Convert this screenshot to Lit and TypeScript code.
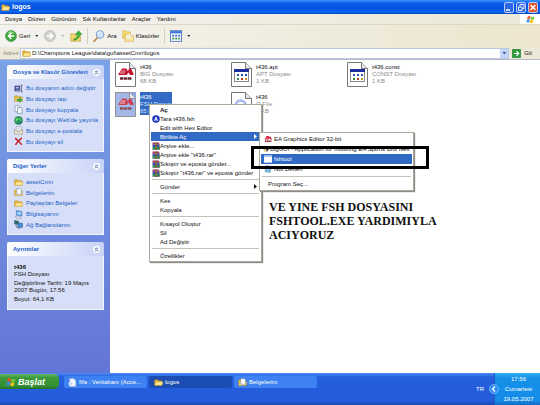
import { LitElement, html, css, svg, nothing } from "lit";
import { customElement, property } from "lit/decorators.js";
import { classMap } from "lit/directives/class-map.js";

const folderShape = svg`
  <path d="M1 4.5Q1 3 2.5 3H6L8 5H13Q14.5 5 14.5 6.5V13H1Z" fill="#e8b93c" stroke="#b08420" stroke-width=".8"/>
  <path d="M1.5 13L3.5 7H16L14 13Z" fill="#ffe795" stroke="#c79a30" stroke-width=".7"/>`;
const eaShape = svg`
  <path d="M1 9L5 2H9L10.500 5L12 2L16 9H12.500L11 6L9 9Z" fill="#c8102e"/>
  <path d="M4 4.600H8M3 7H8" stroke="#fff" stroke-width=".7"/>
  <path d="M2 12.500H15" stroke="#8a1420" stroke-width="3" stroke-dasharray="3 .6"/>`;
const flagShape = svg`
  <path d="M3 2.500Q5.500 1 8 2.500L7 7.500Q4.500 6 2 7.500Z" fill="#ee5126"/>
  <path d="M9 2.800Q11.500 4.200 15 2.800L13.800 8Q10.500 9 8 7.800Z" fill="#7cc142"/>
  <path d="M1.800 8.400Q4.500 7 6.800 8.400L5.600 13.500Q3.300 12 .5 13.500Z" fill="#3f8cf0"/>
  <path d="M7.800 8.800Q10.500 10 13.600 8.900L12.300 14Q9.500 15.200 6.600 13.900Z" fill="#fbc416"/>`;

const icons: Record<string, unknown> = {
  folder: folderShape,
  flag: flagShape,
  ea: eaShape,
  back: svg`<circle cx="8" cy="8" r="7.300" fill="#3aa63a" stroke="#1f7a28" stroke-width=".7"/>
    <path d="M3 5Q5 1.500 8 1.500T13 5Q8 3.500 3 5Z" fill="#9be08f"/>
    <path d="M8.500 4L4.500 8L8.500 12M5 8H12.500" fill="none" stroke="#fff" stroke-width="2"/>`,
  forward: svg`<circle cx="8" cy="8" r="7.300" fill="#d0d0cb" stroke="#a4a49e" stroke-width=".7"/>
    <path d="M7.500 4L11.500 8L7.500 12M11 8H3.500" fill="none" stroke="#fff" stroke-width="2"/>`,
  up: svg`<path d="M1 5H6L7.500 6.500H14V15H1Z" fill="#f6d66c" stroke="#b98f2d" stroke-width=".7"/>
    <path d="M5 12Q10 11 10 6H7L11.500 1L16 6H13Q13 12 5 14Z" fill="#3fb53c" stroke="#1d7c22" stroke-width=".6"/>`,
  search: svg`<path d="M6 10L1.500 15" stroke="#b98a4a" stroke-width="2.400" stroke-linecap="round"/>
    <circle cx="9.500" cy="6" r="5" fill="#cfe6fa" stroke="#7a9cc6" stroke-width="1.400"/>
    <path d="M6.500 5Q7.500 2.500 10 2.500" stroke="#fff" stroke-width="1.300" fill="none"/>`,
  folders: svg`<path d="M1 1H5L6.500 2.500H11V11H1Z" fill="#f8d96e" stroke="#c79a38" stroke-width=".7"/>
    <path d="M4 6H8L9.500 7.500H15.500V15H4Z" fill="#ffe897" stroke="#c79a38" stroke-width=".7"/>
    <circle cx="9" cy="9" r="4" fill="#f3f4e6" stroke="#d8c88c" stroke-width=".6" opacity=".8"/>`,
  views: svg`<rect x=".5" y="1" width="15" height="14" fill="#fff" stroke="#2e5db5"/>
    <rect x="1" y="1.500" width="14" height="3" fill="#3d78dd"/>
    <path d="M3 7.500H13.500" stroke="#2f62c4" stroke-width="2.400" stroke-dasharray="2.500 1.500"/>
    <path d="M3 11.500H13.500" stroke="#3c8f5f" stroke-width="2.400" stroke-dasharray="2.500 1.500"/>`,
  go: svg`<rect x=".5" y=".5" width="15" height="15" rx="1.500" fill="#2f9a38" stroke="#1c7426"/>
    <path d="M8 4L12 8L8 12M11.500 8H3.500" stroke="#fff" stroke-width="2" fill="none"/>`,
  rename: svg`<rect x="1" y="3" width="10" height="10" fill="#33427f"/><rect x="3" y="5" width="6" height="3" fill="#aebdf0"/>
    <path d="M12 2H15M13.500 2V14M12 14H15" stroke="#4d4d62" stroke-width="1.300"/><rect x="3" y="10" width="8" height="3" fill="#7a86b5"/>`,
  move: svg`${folderShape}<path d="M5 9H10V6L15 10.500L10 15V12H5Z" fill="#3caf3b" stroke="#1b7723" stroke-width=".6"/>`,
  copy: svg`<path d="M2 1H8L11 4V12H2Z" fill="#fff" stroke="#67789f"/><path d="M6 4H11L14.500 7V15H6Z" fill="#e9f4f8" stroke="#4f7d86"/>`,
  web: svg`<circle cx="8" cy="8" r="7" fill="#27955a" stroke="#14693c"/>
    <path d="M3 5Q6 2 8 4T6 8T4 12Q1 9 3 5ZM10 3Q14 5 13 9L10 8Z" fill="#66d46e"/><path d="M9 10L13 12L9 14Z" fill="#2f6dd6"/>`,
  mail: svg`<path d="M4 1H13V9H4Z" fill="#fff" stroke="#8e93a8"/><path d="M1 6L8 11L15 6V14.500H1Z" fill="#f1ead2" stroke="#90866a"/>
    <path d="M6 3.500H11M6 5.500H11" stroke="#9aa9d2"/>`,
  remove: svg`<path d="M2 2Q8 7 14 14M14 1.500Q7 7 2.500 14" stroke="#c22330" stroke-width="2.600" fill="none"/>`,
  documents: svg`${folderShape}<path d="M5 1H11L13 3V11H5Z" fill="#fff" stroke="#6f86b8"/>`,
  computer: svg`<path d="M4 1L14 2.500V11L4 9.500Z" fill="#3f8ee4" stroke="#6c7fa8"/><path d="M5.500 3L12.500 4V9L5.500 8Z" fill="#9fdcff"/>
    <path d="M2 11.500L11 12L13 15H4Z" fill="#dfe4ee" stroke="#7c89a6" stroke-width=".7"/>`,
  network: svg`<path d="M1 1L8 2V8L1 7Z" fill="#2d6f5b" stroke="#36507d"/><path d="M7 5L15 6V13L7 12Z" fill="#3a93df" stroke="#36507d"/>
    <path d="M3 9L6 14H12" stroke="#36507d" stroke-width="1.500" fill="none"/>`,
  avast: svg`<circle cx="8" cy="8" r="7.500" fill="#1b34b8"/><path d="M5 12L8 4L11 12M6 9.500H10" stroke="#fff" stroke-width="1.800" fill="none"/>`,
  archive: svg`<rect x="1" y="1" width="13" height="4.500" fill="#a33a64"/><rect x="1" y="5.500" width="13" height="4.500" fill="#3b4fa8"/>
    <rect x="1" y="10" width="14" height="4.500" fill="#2f8c58"/><path d="M7 1H10V15H7Z" fill="#8c6b34"/><path d="M1 15H15V3" fill="none" stroke="#222"/>`,
  big: svg`<path d="M4 2L8 6L6 14L2 8Z" fill="#d9b640"/><path d="M8 6L14 9L9 14Z" fill="#3d3d3d"/>`,
  program: svg`<rect x="0" y="1" width="16" height="14" fill="#fff" stroke="#d7dff0"/><rect x="0" y="1" width="16" height="2.500" fill="#8ab0ec"/>`,
  notepad: svg`<path d="M4 1L14 3L12 15L2 13Z" fill="#7cc0e8" stroke="#38789f"/>`,
  database: svg`<path d="M3 1H10L14 5V15H3Z" fill="#eef4ff" stroke="#9ab"/><circle cx="5" cy="10" r="3.500" fill="#c6d9f6" stroke="#fff"/>`,
};

const icon = (name: string) =>
  html`<svg class="icon" viewBox="0 0 16 16" aria-hidden="true">${icons[name] ?? nothing}</svg>`;

const fileArt: Record<string, unknown> = {
  ea: svg`<path d="M3 13L7 6.500H11.500L13 9.500L14 6.500H16L19 13H15L13.500 10.500L11.500 13Z" fill="#c4122c"/>
    <path d="M6 9H10.500M5 11H10" stroke="#fff" stroke-width=".7"/><path d="M5 16.500H17" stroke="#6b2a35" stroke-width="2.400" stroke-dasharray="3.400 .5"/>`,
  unknown: svg`<rect x="3.500" y="7.500" width="14" height="12" fill="#fff" stroke="#8a8a94"/><rect x="3" y="7" width="15" height="3" fill="#1c2e9c"/>
    <path d="M6 13H8M10 13H12M14 13H16" stroke="#2c50b8" stroke-width="2"/><path d="M6 17H8" stroke="#2f8f4b" stroke-width="2"/><path d="M10 17H12" stroke="#c23434" stroke-width="2"/><path d="M14 17H16" stroke="#c59a28" stroke-width="2"/>`,
  object: svg`<path d="M6 17A5 5 0 1 1 14 16" fill="none" stroke="#a9b8ee" stroke-width="2.500"/>`,
};

interface MenuEntry { label: string; icon?: string; bold?: boolean; active?: boolean; sub?: boolean; flush?: boolean }

@customElement("popup-menu")
class PopupMenu extends LitElement {
  @property({ attribute: false }) entries: (MenuEntry | null)[] = [];

  static styles = css`
    :host { display: block; background: #fff; border: 1px solid #aca899; box-shadow: 1px 1px 1px #8c8c8c; }
    .list { list-style: none; margin: 0; padding: var(--menu-pad, 0) 1px 1px; }
    .rule { height: 1px; margin: 2px 1px; background: #c5c2b8; }
    .item {
      display: flex; align-items: center; width: 100%; height: var(--row, 9px); padding: 0 3px 0 1px;
      border: 0; background: none; color: #111; text-align: left; white-space: nowrap;
      font: 6px/8px "Liberation Sans", Arial, sans-serif;
    }
    .bold { font-weight: bold; }
    .active { background: #316ac5; color: #fff; }
    .mark { width: var(--mark, 8px); height: 8px; display: flex; justify-content: center; }
    .flush .mark { width: 6px; }
    .icon { width: 8px; height: 8px; }
    .label { flex: 1; }
    .arrow { width: 3px; height: 5px; background: currentColor; clip-path: polygon(0 0, 100% 50%, 0 100%); }
  `;

  render() {
    return html`<ul class="list" role="menu">
      ${this.entries.map((e) => e
        ? html`<li role="none"><button role="menuitem" class=${classMap({ item: true, bold: !!e.bold, active: !!e.active, flush: !!e.flush })}>
            <span class="mark">${e.icon ? icon(e.icon) : nothing}</span><span class="label">${e.label}</span>
            ${e.sub ? html`<span class="arrow"></span>` : nothing}</button></li>`
        : html`<li class="rule" role="separator"></li>`)}
    </ul>`;
  }
}

@customElement("task-panel")
class TaskPanel extends LitElement {
  @property() heading = "";

  static styles = css`
    :host { display: block; }
    .head {
      display: flex; align-items: center; justify-content: space-between; height: 14px; padding: 0 3px 0 6px;
      border-radius: 2px 2px 0 0; background: linear-gradient(90deg, #fff, #c6d3f7);
    }
    .title { margin: 0; font: bold 6px/12px "Liberation Sans", Arial, sans-serif; color: #215dc6; white-space: nowrap; }
    .toggle { width: 9px; height: 9px; padding: 0; border: 0; background: none; display: flex; }
    .chevrons { width: 9px; height: 9px; }
    .body { background: #d6dff7; border: 1px solid #f2f5fd; border-top: 0; padding: 4px 6px; }
  `;

  render() {
    return html`<div class="head"><h2 class="title">${this.heading}</h2>
        <button class="toggle" aria-label=${this.heading}><svg class="chevrons" viewBox="0 0 18 18">
          <circle cx="9" cy="9" r="8" fill="#fff" stroke="#b3c2e6"/>
          <path d="M6 8.500L9 5.500L12 8.500M6 12.500L9 9.500L12 12.500" fill="none" stroke="#2b4a96" stroke-width="1.800"/></svg></button></div>
      <div class="body"><slot></slot></div>`;
  }
}

@customElement("app-root")
class AppRoot extends LitElement {
  static styles = css`
    :host {
      display: flex; flex-direction: column; min-height: 100vh; overflow: hidden; background: #fff; color: #111;
      font: 6px/8px "Liberation Sans", Arial, sans-serif;
    }
    * { box-sizing: border-box; }
    button, input { font: inherit; color: inherit; padding: 0; border: 0; background: none; }
    .icon { display: block; flex: none; width: 9px; height: 9px; }
    .titlebar {
      display: flex; align-items: center; gap: 2px; height: 14px; padding: 0 2px 0 1px; color: #fff;
      background: linear-gradient(#3a93ff, #0a5be8 25%, #0653e0 65%, #0a68fc 85%, #0342b5);
    }
    .caption { flex: 1; margin: 0; font: bold 7px/12px "Liberation Sans", Arial, sans-serif; }
    .winbtn { width: 10px; height: 11px; border: 1px solid #b8cdf8; border-radius: 2px; background: #2e66e4; }
    .winbtn.close { background: #e0532c; }
    .glyph { display: block; width: 8px; height: 9px; }
    .menubar { display: flex; height: 11px; background: linear-gradient(90deg, #f3f2ee, #ece8d6); border-bottom: 1px solid #dcd8c6; }
    .menus { flex: 1; display: flex; align-items: center; gap: 6px; padding-left: 5px; }
    .brand { width: 20px; background: #fff; display: flex; align-items: center; justify-content: center; }
    .toolbar {
      display: flex; align-items: center; height: 22px; padding-left: 5px; gap: 5px;
      background: linear-gradient(90deg, #f4f3f0, #efecdd 60%, #ede5cd);
    }
    .tool { display: flex; align-items: center; gap: 2px; white-space: nowrap; }
    .tool .icon { width: 12px; height: 12px; }
    .drop { width: 3px; height: 2px; margin-right: 1px; background: #222; clip-path: polygon(0 0, 100% 0, 50% 100%); }
    .drop.off { background: #b5b3a8; }
    .divider { width: 1px; height: 16px; background: #d3cfbf; }
    .address { display: flex; align-items: center; gap: 2px; height: 12px; padding: 0 8px 0 3px; background: #ede9d8; }
    .hint { color: #8f8c80; width: 15px; }
    .combo { flex: 1; display: flex; align-items: center; gap: 1px; height: 11px; padding-left: 1px; background: #fff; border: 1px solid #b9c8dc; }
    .path { flex: 1; min-width: 0; height: 9px; }
    .pull { width: 8px; height: 9px; background: #c4d5fb; display: flex; align-items: center; justify-content: center; }
    .pull .drop { background: #2d4d8f; width: 4px; height: 3px; margin: 0; }
    .go { display: flex; align-items: center; gap: 3px; margin-left: 1px; }
    .main { flex: 1; display: flex; position: relative; border-top: 1px solid #b4bac8; }
    .side {
      width: 110px; padding: 5px 6px 0 7px; display: flex; flex-direction: column; gap: 7px;
      background: linear-gradient(#7ba2e7, #6375d6);
    }
    .links { list-style: none; margin: 0; padding: 0; display: grid; grid-auto-rows: 1fr; align-items: center; }
    .links.six { height: 64px; }
    .links.five { height: 53px; }
    .link { display: flex; align-items: center; gap: 3px; color: #215dc6; text-decoration: none; white-space: nowrap; }
    .facts { margin: 0 0 2px; line-height: 7px; white-space: nowrap; }
    .facts.first { padding-top: 4px; }
    .files {
      flex: 1; display: grid; grid-template-columns: repeat(auto-fill, 112px); column-gap: 4px; grid-auto-rows: 25px; row-gap: 5px;
      align-content: start; padding: 2px 0 0 5px;
    }
    .file { display: flex; gap: 4px; }
    .sheet { width: 21px; height: 25px; flex: none; }
    .desc { margin: 0; line-height: 7px; color: #8b8b8b; padding-top: 2px; }
    .name { color: #111; }
    .picked .sheet { background: #7591d0; opacity: .8; }
    .picked .desc { background: #316ac5; color: #d8e4fa; align-self: start; width: 32px; white-space: nowrap; }
    .picked .name { color: #fff; }
    .context { position: absolute; left: 149px; top: 44px; width: 113px; }
    .submenu { position: absolute; left: 259px; top: 72px; width: 155px; --row: 10px; --mark: 12px; --menu-pad: 1px; }
    .frame { position: absolute; left: 251px; top: 86px; width: 178px; height: 23px; border: 3px solid #000; pointer-events: none; }
    .note { position: absolute; left: 269px; top: 140px; margin: 0; font: bold 12px/14px "Liberation Serif", serif; color: #111; white-space: nowrap; }
    .taskbar {
      display: flex; align-items: flex-start; height: 32px; color: #fff;
      background: linear-gradient(#4a8cf4, #2560de 12%, #245bdb 88%, #1a45ad);
    }
    .start {
      display: flex; align-items: center; gap: 2px; width: 59px; height: 15px; margin-top: 1px; padding-left: 6px;
      border-radius: 0 5px 5px 0; color: #fff; background: linear-gradient(#6cb86a, #3a9a3a 25%, #349034 80%, #256f28);
      font: italic bold 9px/14px "Liberation Sans", Arial, sans-serif;
    }
    .start .icon { width: 10px; height: 10px; }
    .tasks { flex: 1; display: flex; gap: 2px; padding: 3px 0 0 5px; }
    .task {
      display: flex; align-items: center; gap: 2px; width: 83px; height: 12px; padding-left: 4px; border-radius: 2px;
      color: #fff; background: #3d81f2; white-space: nowrap;
    }
    .task.current { background: #1c4db2; padding-left: 5px; }
    .lang { padding-top: 12px; width: 18px; }
    .clock {
      display: flex; align-self: stretch; width: 46px; border-left: 1px solid #1b5cc0;
      background: linear-gradient(#35b0f4, #1490e8 15%, #158ce8 85%, #0f6cc0);
    }
    .expand { width: 10px; height: 10px; margin: 11px 0 0 -6px; }
    .time { flex: 1; margin: 1px 2px 0 0; text-align: center; line-height: 10px; }
  `;

  private link(name: string, label: string) {
    return html`<li><a class="link" href="#">${icon(name)}${label}</a></li>`;
  }

  private file(art: string, name: string, kind: string, size: string, picked = false) {
    return html`<div class=${classMap({ file: true, picked })}>
      <svg class="sheet" viewBox="0 0 21 25" aria-hidden="true">
        <path d="M.5 .5H14.500L20.500 6.500V24.500H.5Z" fill=${picked ? "#8ea7e0" : "#fff"} stroke="#77777c"/>
        <path d="M14.500 .5V6.500H20.500" fill="#e6e6ea" stroke="#77777c"/>${fileArt[art]}</svg>
      <p class="desc"><span class="name">${name}</span><br>${kind}<br>${size}</p></div>`;
  }

  private task(name: string, label: string, current = false) {
    return html`<button class=${classMap({ task: true, current })}>${icon(name)}${label}</button>`;
  }

  render() {
    const context: (MenuEntry | null)[] = [
      { label: "Aç", bold: true },
      { label: "Tara t436.fsh", icon: "avast" },
      { label: "Edit with Hex Editor" },
      { label: "Birlikte Aç", active: true, sub: true },
      { label: "Arşive ekle...", icon: "archive" },
      { label: 'Arşive ekle "t436.rar"', icon: "archive" },
      { label: "Sıkıştır ve eposta gönder...", icon: "archive" },
      { label: 'Sıkıştır "t436.rar" ve eposta gönder', icon: "archive" },
      null,
      { label: "Gönder", sub: true },
      null,
      { label: "Kes" }, { label: "Kopyala" },
      null,
      { label: "Kısayol Oluştur" }, { label: "Sil" }, { label: "Ad Değiştir" },
      null,
      { label: "Özellikler" },
    ];
    const openWith: (MenuEntry | null)[] = [
      { label: "EA Graphics Editor 32-bit", icon: "ea" },
      { label: "BigGUI - Application for modifing EA Sports BIG files", icon: "big" },
      { label: "fshtool", icon: "program", active: true },
      { label: "Not Defteri", icon: "notepad" },
      null,
      { label: "Program Seç...", flush: true },
    ];
    return html`
      <header class="titlebar">${icon("folder")}<h1 class="caption">logos</h1>
        <button class="winbtn" aria-label="Simge"><svg class="glyph" viewBox="0 0 8 9"><path d="M1 7H5" stroke="#fff" stroke-width="1.500"/></svg></button>
        <button class="winbtn" aria-label="Geri yükle"><svg class="glyph" viewBox="0 0 8 9"><path d="M3 3.500V1.500H7V5.500H5.500M1.500 4H5V7.500H1.500Z" fill="none" stroke="#fff" stroke-width=".9"/></svg></button>
        <button class="winbtn close" aria-label="Kapat"><svg class="glyph" viewBox="0 0 8 9"><path d="M1.500 2L6.500 7M6.500 2L1.500 7" stroke="#fff" stroke-width="1.500"/></svg></button>
      </header>
      <nav class="menubar"><div class="menus">
          ${["Dosya", "Düzen", "Görünüm", "Sık Kullanılanlar", "Araçlar", "Yardım"].map((m) => html`<button>${m}</button>`)}
        </div><div class="brand">${icon("flag")}</div></nav>
      <div class="toolbar">
        <button class="tool">${icon("back")}Geri</button><span class="drop"></span>
        <button class="tool" aria-label="İleri">${icon("forward")}</button><span class="drop off"></span>
        <button class="tool" aria-label="Yukarı">${icon("up")}</button><span class="divider"></span>
        <button class="tool">${icon("search")}Ara</button>
        <button class="tool">${icon("folders")}Klasörler</button><span class="divider"></span>
        <button class="tool" aria-label="Görünümler">${icon("views")}</button><span class="drop"></span>
      </div>
      <div class="address"><label class="hint" for="path">Adres</label>
        <div class="combo">${icon("folder")}<input class="path" id="path" value="D:\\Champions League\\data\\gul\\assetCmn\\logos">
          <button class="pull" aria-label="Adres listesi"><span class="drop"></span></button></div>
        <button class="go">${icon("go")}Git</button>
      </div>
      <main class="main">
        <aside class="side">
          <task-panel heading="Dosya ve Klasör Görevleri"><ul class="links six">
            ${this.link("rename", "Bu dosyanın adını değiştir")}
            ${this.link("move", "Bu dosyayı taşı")}
            ${this.link("copy", "Bu dosyayı kopyala")}
            ${this.link("web", "Bu dosyayı Web'de yayınla")}
            ${this.link("mail", "Bu dosyayı e-postala")}
            ${this.link("remove", "Bu dosyayı sil")}
          </ul></task-panel>
          <task-panel heading="Diğer Yerler"><ul class="links five">
            ${this.link("folder", "assetCmn")}
            ${this.link("documents", "Belgelerim")}
            ${this.link("folder", "Paylaşılan Belgeler")}
            ${this.link("computer", "Bilgisayarım")}
            ${this.link("network", "Ağ Bağlantılarım")}
          </ul></task-panel>
          <task-panel heading="Ayrıntılar">
            <p class="facts first"><b>t436</b><br>FSH Dosyası</p>
            <p class="facts">Değiştirilme Tarihi: 19 Mayıs<br>2007 Bugün, 17:56</p>
            <p class="facts">Boyut: 64,1 KB</p>
          </task-panel>
        </aside>
        <section class="files">
          ${this.file("ea", "t436", "BIG Dosyası", "68 KB")}
          ${this.file("unknown", "t436.apt", "APT Dosyası", "1 KB")}
          ${this.file("unknown", "t436.const", "CONST Dosyası", "1 KB")}
          ${this.file("ea", "t436", "FSH Dosyası", "65 KB", true)}
          ${this.file("object", "t436", "O File", "1 KB")}
        </section>
        <popup-menu class="context" .entries=${context}></popup-menu>
        <popup-menu class="submenu" .entries=${openWith}></popup-menu>
        <div class="frame"></div>
        <p class="note">VE YINE FSH DOSYASINI<br>FSHTOOL.EXE YARDIMIYLA<br>ACIYORUZ</p>
      </main>
      <footer class="taskbar">
        <button class="start">${icon("flag")}Başlat</button>
        <div class="tasks">${this.task("database", "fifa : Veritabanı (Acce...")}${this.task("folder", "logos", true)}${this.task("documents", "Belgelerim")}</div>
        <span class="lang">TR</span>
        <div class="clock"><svg class="expand" viewBox="0 0 10 10"><circle cx="5" cy="5" r="4.500" fill="#2f8df0" stroke="#8cc8fb" stroke-width=".7"/><path d="M6 2.500L3.500 5L6 7.500" fill="none" stroke="#fff" stroke-width="1.300"/></svg>
          <p class="time">17:56<br>Cumartesi<br>19.05.2007</p></div>
      </footer>`;
  }
}
